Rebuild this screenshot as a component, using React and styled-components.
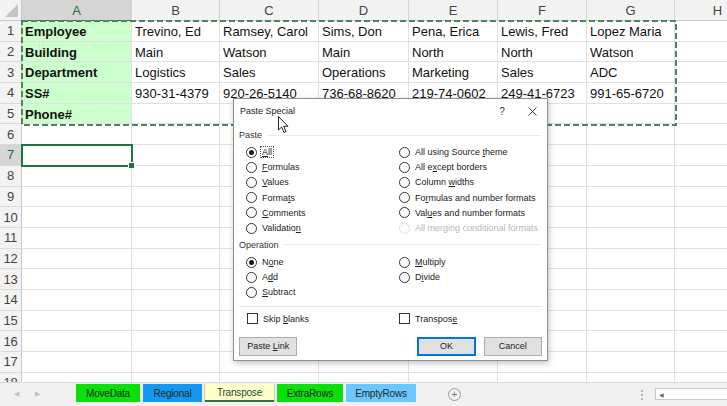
import styled, { createGlobalStyle } from 'styled-components';

const GlobalStyle = createGlobalStyle`
  html, body {
    margin: 0;
    padding: 0;
    overflow: hidden;
    background: #ffffff;
    font-family: "Liberation Sans", Arial, sans-serif;
  }
`;

const COLS = [
  { name: 'A', width: 110 },
  { name: 'B', width: 88 },
  { name: 'C', width: 99 },
  { name: 'D', width: 90 },
  { name: 'E', width: 89 },
  { name: 'F', width: 89 },
  { name: 'G', width: 88 },
  { name: 'H', width: 86 },
];

const DATA = [
  ['Employee', 'Trevino, Ed', 'Ramsey, Carol', 'Sims, Don', 'Pena, Erica', 'Lewis, Fred', 'Lopez Maria'],
  ['Building', 'Main', 'Watson', 'Main', 'North', 'North', 'Watson'],
  ['Department', 'Logistics', 'Sales', 'Operations', 'Marketing', 'Sales', 'ADC'],
  ['SS#', '930-31-4379', '920-26-5140', '736-68-8620', '219-74-0602', '249-41-6723', '991-65-6720'],
  ['Phone#', '', '', '', '', '', ''],
];

const ROW_COUNT = 18;
const SELECTED_ROW = 7;

const Screen = styled.div`
  position: relative;
  display: flex;
  flex-direction: column;
  height: 100vh;
  overflow: hidden;
`;

const SheetArea = styled.div`
  position: relative;
  flex: 1;
  overflow: hidden;
`;

const Sheet = styled.div`
  display: grid;
  grid-template-columns: 22px ${COLS.map((c) => `${c.width}px`).join(' ')};
  grid-template-rows: 21px repeat(${ROW_COUNT}, 20.7px);
`;

const Corner = styled.div`
  position: relative;
  background: #f3f3f3;
  border-right: 1px solid #c9c9c9;
  border-bottom: 1px solid #c9c9c9;
  box-sizing: border-box;

  &::after {
    content: '';
    position: absolute;
    right: 3px;
    bottom: 3px;
    width: 0;
    height: 0;
    border-left: 13px solid transparent;
    border-bottom: 13px solid #c4c4c4;
  }
`;

const ColHeader = styled.div`
  display: flex;
  align-items: center;
  justify-content: center;
  box-sizing: border-box;
  background: ${(p) => (p.$active ? '#d6d6d6' : '#f3f3f3')};
  color: ${(p) => (p.$active ? '#1e6b3c' : '#444')};
  border-right: 1px solid #d4d4d4;
  border-bottom: 1px solid ${(p) => (p.$active ? '#217346' : '#c9c9c9')};
  font-size: 13px;
  padding-top: 1px;
`;

const RowHeader = styled.div`
  display: flex;
  align-items: center;
  justify-content: center;
  box-sizing: border-box;
  background: ${(p) => (p.$active ? '#d6d6d6' : '#f3f3f3')};
  color: ${(p) => (p.$active ? '#1e6b3c' : '#444')};
  border-right: 1px solid ${(p) => (p.$active ? '#217346' : '#c9c9c9')};
  border-bottom: 1px solid #dadada;
  font-size: 13px;
  letter-spacing: -0.3px;
`;

const Cell = styled.div`
  display: flex;
  align-items: center;
  box-sizing: border-box;
  padding: 1px 0 0 3px;
  background: ${(p) => (p.$label ? '#ccffcc' : '#ffffff')};
  border-right: 1px solid #e1e1e1;
  border-bottom: 1px solid #e1e1e1;
  color: #111;
  font-size: 13px;
  font-weight: ${(p) => (p.$label ? 700 : 400)};
  white-space: nowrap;
  overflow: hidden;
`;

const CopyMarquee = styled.svg`
  position: absolute;
  left: 21px;
  top: 20px;
  width: 656px;
  height: 106px;
  overflow: visible;
  pointer-events: none;
`;

const ActiveCell = styled.div`
  position: absolute;
  left: 21px;
  top: 144px;
  width: 112px;
  height: 23px;
  box-sizing: border-box;
  border: 2px solid #217346;

  &::after {
    content: '';
    position: absolute;
    right: -4px;
    bottom: -4px;
    width: 5px;
    height: 5px;
    background: #217346;
    border: 1px solid #fff;
  }
`;

/* ---------- Paste Special dialog ---------- */

const Dialog = styled.div`
  position: absolute;
  left: 233px;
  top: 98px;
  width: 315px;
  height: 263px;
  box-sizing: border-box;
  background: #ffffff;
  border: 1px solid #8f8f8f;
  box-shadow: 1px 2px 6px rgba(0, 0, 0, 0.25);
  font-family: "Liberation Sans", Arial, sans-serif;
  font-size: 9px;
  color: #222;
  display: flex;
  flex-direction: column;
`;

const TitleBar = styled.div`
  height: 24px;
  display: flex;
  align-items: center;
  padding: 0 0 0 6px;
  flex-shrink: 0;
`;

const Title = styled.div`
  flex: 1;
  font-size: 9px;
  color: #222;
`;

const TitleButton = styled.div`
  width: 30px;
  height: 24px;
  display: flex;
  align-items: center;
  justify-content: center;
  color: #333;
  font-size: 10px;
`;

const Body = styled.div`
  padding: 0 5px;
  display: flex;
  flex-direction: column;
`;

const GroupLabel = styled.div`
  display: flex;
  align-items: center;
  height: 12px;
  margin-top: ${(p) => p.$top}px;
  color: #333;

  &::after {
    content: '';
    flex: 1;
    height: 1px;
    margin-left: 5px;
    background: #ececec;
  }
`;

const OptionGrid = styled.div`
  display: grid;
  grid-template-columns: 153px 1fr;
  grid-template-rows: repeat(${(p) => p.$rows}, 15.2px);
  grid-auto-flow: column;
  padding-left: 7px;
  margin-top: 3.5px;
`;

const Option = styled.div`
  display: flex;
  align-items: center;
  gap: 3px;
  color: ${(p) => (p.$disabled ? '#b8b8b8' : '#222')};
  white-space: nowrap;
`;

const RadioCircle = styled.span`
  width: 11px;
  height: 11px;
  box-sizing: border-box;
  border-radius: 50%;
  border: 1px solid ${(p) => (p.$disabled ? '#e0e0e0' : '#333')};
  background: #fff;
  display: flex;
  align-items: center;
  justify-content: center;
  flex-shrink: 0;

  &::after {
    content: '';
    width: 5px;
    height: 5px;
    border-radius: 50%;
    background: ${(p) => (p.$checked ? '#1a1a1a' : 'transparent')};
  }
`;

const OptionText = styled.span`
  padding: 0 1px;
  border: 1px dotted ${(p) => (p.$focused ? '#555' : 'transparent')};
`;

const Separator = styled.div`
  height: 1px;
  background: #e6e6e6;
  margin-top: 6px;
`;

const CheckRow = styled.div`
  display: grid;
  grid-template-columns: 152px 1fr;
  padding-left: 8px;
  height: 14px;
  margin-top: 5px;
`;

const CheckBox = styled.span`
  width: 11px;
  height: 11px;
  box-sizing: border-box;
  border: 1px solid #333;
  background: #fff;
  flex-shrink: 0;
`;

const ButtonRow = styled.div`
  display: flex;
  align-items: center;
  margin-top: 11px;
`;

const DialogButton = styled.div`
  width: ${(p) => p.$w}px;
  height: 19px;
  box-sizing: border-box;
  margin-left: ${(p) => p.$ml || 0}px;
  display: flex;
  align-items: center;
  justify-content: center;
  background: #e1e1e1;
  border: ${(p) => (p.$primary ? '2px solid #0078d7' : '1px solid #adadad')};
  color: #222;
  font-size: 9px;
`;

const Cursor = styled.svg`
  position: absolute;
  left: 278px;
  top: 116px;
  width: 12px;
  height: 18px;
  pointer-events: none;
`;

/* ---------- sheet tabs ---------- */

const TabBar = styled.div`
  height: 24px;
  flex-shrink: 0;
  box-sizing: border-box;
  background: #f1f1f1;
  border-top: 1px solid #d8d8d8;
  display: flex;
  align-items: flex-start;
  font-family: "Liberation Sans", Arial, sans-serif;
`;

const NavArrows = styled.div`
  width: 76px;
  height: 22px;
  display: flex;
  align-items: center;
  gap: 16px;
  padding-left: 14px;
  box-sizing: border-box;
  color: #c2c2c2;
  font-size: 7px;
`;

const Tabs = styled.div`
  display: flex;
  gap: 3px;
  padding-top: 1px;
`;

const Tab = styled.div`
  width: ${(p) => p.$w}px;
  height: 18px;
  box-sizing: border-box;
  display: flex;
  align-items: center;
  justify-content: center;
  background: ${(p) => p.$bg};
  color: ${(p) => (p.$active ? '#1d4d2a' : '#1a2a1a')};
  font-size: 10px;
  letter-spacing: -0.2px;
  border-bottom: ${(p) => (p.$active ? '2px solid #3d6b4a' : 'none')};
  box-shadow: ${(p) => (p.$active ? '1px 0 0 #c8c8c8, -1px 0 0 #c8c8c8' : 'none')};
`;

const AddSheet = styled.div`
  width: 11px;
  height: 11px;
  margin: 5px 0 0 32px;
  border: 1px solid #9a9a9a;
  border-radius: 50%;
  display: flex;
  align-items: center;
  justify-content: center;
  color: #777;
  font-size: 10px;
  line-height: 1;
`;

const Spacer = styled.div`
  flex: 1;
`;

const SplitDots = styled.div`
  width: 3px;
  display: flex;
  flex-direction: column;
  gap: 2px;
  margin: 7px 11px 0 0;

  span {
    width: 2px;
    height: 2px;
    background: #b5b5b5;
  }
`;

const HScroll = styled.div`
  width: 72px;
  height: 12px;
  margin-top: 5px;
  box-sizing: border-box;
  border: 1px solid #c9c9c9;
  border-right: none;
  background: #fff;
  display: flex;
  align-items: center;
  padding-left: 3px;
  color: #666;
  font-size: 6px;
`;

function Label({ text, u, focused }) {
  if (u === undefined || u < 0) return <OptionText $focused={focused}>{text}</OptionText>;
  return (
    <OptionText $focused={focused}>
      {text.slice(0, u)}
      <u>{text[u]}</u>
      {text.slice(u + 1)}
    </OptionText>
  );
}

function Radio({ text, u, checked, disabled, focused }) {
  return (
    <Option $disabled={disabled}>
      <RadioCircle $checked={checked} $disabled={disabled} />
      <Label text={text} u={u} focused={focused} />
    </Option>
  );
}

const PASTE_OPTIONS = [
  { text: 'All', u: 0, checked: true, focused: true },
  { text: 'Formulas', u: 0 },
  { text: 'Values', u: 0 },
  { text: 'Formats', u: 5 },
  { text: 'Comments', u: 0 },
  { text: 'Validation', u: 9 },
  { text: 'All using Source theme', u: 17 },
  { text: 'All except borders', u: 5 },
  { text: 'Column widths', u: 7 },
  { text: 'Formulas and number formats', u: 2 },
  { text: 'Values and number formats', u: 3 },
  { text: 'All merging conditional formats', disabled: true },
];

const OPERATION_OPTIONS = [
  { text: 'None', u: 1, checked: true },
  { text: 'Add', u: 1 },
  { text: 'Subtract', u: 0 },
  { text: 'Multiply', u: 0 },
  { text: 'Divide', u: 1 },
];

const SHEETS = [
  { name: 'MoveData', bg: '#0be00b', w: 64 },
  { name: 'Regional', bg: '#1598f2', w: 59 },
  { name: 'Transpose', bg: '#ffffcc', w: 69, active: true },
  { name: 'ExtraRows', bg: '#0be00b', w: 66 },
  { name: 'EmptyRows', bg: '#6cc6ff', w: 70 },
];

function PasteSpecialDialog() {
  return (
    <Dialog>
      <TitleBar>
        <Title>Paste Special</Title>
        <TitleButton>?</TitleButton>
        <TitleButton>
          <svg width="9" height="9" viewBox="0 0 9 9">
            <path d="M0.5 0.5 L8.5 8.5 M8.5 0.5 L0.5 8.5" stroke="#333" strokeWidth="1" />
          </svg>
        </TitleButton>
      </TitleBar>
      <Body>
        <GroupLabel $top={6}>Paste</GroupLabel>
        <OptionGrid $rows={6}>
          {PASTE_OPTIONS.map((o) => (
            <Radio key={o.text} {...o} />
          ))}
        </OptionGrid>
        <GroupLabel $top={3.3}>Operation</GroupLabel>
        <OptionGrid $rows={3}>
          {OPERATION_OPTIONS.map((o) => (
            <Radio key={o.text} {...o} />
          ))}
        </OptionGrid>
        <Separator />
        <CheckRow>
          <Option>
            <CheckBox />
            <Label text="Skip blanks" u={5} />
          </Option>
          <Option>
            <CheckBox />
            <Label text="Transpose" u={8} />
          </Option>
        </CheckRow>
        <ButtonRow>
          <DialogButton $w={59}>
            <Label text="Paste Link" u={6} />
          </DialogButton>
          <DialogButton $w={59} $ml={120} $primary>
            OK
          </DialogButton>
          <DialogButton $w={59} $ml={8}>
            Cancel
          </DialogButton>
        </ButtonRow>
      </Body>
    </Dialog>
  );
}

function SpreadsheetGrid() {
  const rows = [];
  for (let r = 1; r <= ROW_COUNT; r += 1) {
    const values = DATA[r - 1] || [];
    rows.push(
      <RowHeader key={`h${r}`} $active={r === SELECTED_ROW}>
        {r}
      </RowHeader>
    );
    COLS.forEach((c, i) => {
      const isLabel = i === 0 && r <= DATA.length;
      rows.push(
        <Cell key={`${c.name}${r}`} $label={isLabel}>
          {values[i] || ''}
        </Cell>
      );
    });
  }

  return (
    <SheetArea>
      <Sheet>
        <Corner />
        {COLS.map((c) => (
          <ColHeader key={c.name} $active={c.name === 'A'}>
            {c.name}
          </ColHeader>
        ))}
        {rows}
      </Sheet>
      <CopyMarquee viewBox="0 0 656 106">
        <rect
          x="1"
          y="1"
          width="654"
          height="104"
          fill="none"
          stroke="#4f8462"
          strokeWidth="2"
          strokeDasharray="6 3"
        />
      </CopyMarquee>
      <ActiveCell />
    </SheetArea>
  );
}

function SheetTabs() {
  return (
    <TabBar>
      <NavArrows>
        <span>◀</span>
        <span>▶</span>
      </NavArrows>
      <Tabs>
        {SHEETS.map((s) => (
          <Tab key={s.name} $bg={s.bg} $w={s.w} $active={s.active}>
            {s.name}
          </Tab>
        ))}
      </Tabs>
      <AddSheet>+</AddSheet>
      <Spacer />
      <SplitDots>
        <span />
        <span />
        <span />
      </SplitDots>
      <HScroll>◀</HScroll>
    </TabBar>
  );
}

export default function App() {
  return (
    <>
      <GlobalStyle />
      <Screen>
        <SpreadsheetGrid />
        <SheetTabs />
        <PasteSpecialDialog />
        <Cursor viewBox="0 0 12 18">
          <path
            d="M0.5 0.5 L0.5 14 L3.6 11 L6 16.5 L8 15.6 L5.7 10.3 L10 10.3 Z"
            fill="#fff"
            stroke="#222"
            strokeWidth="1"
            strokeLinejoin="round"
          />
        </Cursor>
      </Screen>
    </>
  );
}
